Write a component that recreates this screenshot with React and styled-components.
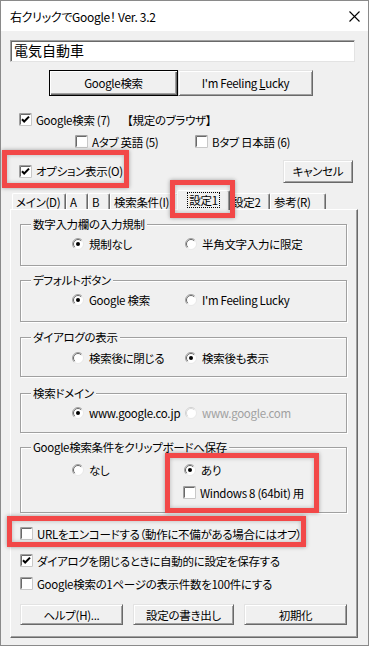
import React from 'react';
import styled, { createGlobalStyle } from 'styled-components';

const GlobalStyle = createGlobalStyle`
  * { box-sizing: border-box; }
  body {
    margin: 0;
    background: #f0f0f0;
  }
`;

const Frame = styled.div`
  position: relative;
  width: 369px;
  height: 646px;
  border: 1px solid #8a8a8a;
  background: #f0f0f0;
  display: flex;
  flex-direction: column;
  font-family: "Noto Sans CJK JP", "Noto Sans", sans-serif;
  font-size: 11.5px;
  font-feature-settings: "palt";
  letter-spacing: -0.3px;
  color: #000;
  overflow: hidden;
`;

const TitleBar = styled.div`
  height: 30px;
  flex: none;
  background: #fff;
  display: flex;
  align-items: center;
  justify-content: space-between;
  padding: 0 8px 0 9px;
`;

const TitleText = styled.span`
  font-size: 12px;
  line-height: 16px;
  padding-top: 1px;
`;

const SearchInput = styled.div`
  margin: 9px 13px 0 9px;
  height: 22px;
  background: #fff;
  border: 1px solid;
  border-color: #a0a0a0 #e3e3e3 #e3e3e3 #a0a0a0;
  box-shadow: inset 1px 1px 0 #696969;
  font-size: 14px;
  letter-spacing: 0;
  line-height: 19px;
  padding-left: 3px;
`;

const ButtonRow = styled.div`
  display: flex;
  margin-top: 8px;
  padding-left: 48px;
`;

const Button = styled.div`
  width: ${p => p.$w}px;
  height: ${p => p.$h || 21}px;
  display: flex;
  align-items: center;
  justify-content: center;
  background: #f0f0f0;
  border: 1px solid;
  border-color: ${p => (p.$default ? '#000' : '#e3e3e3 #696969 #696969 #e3e3e3')};
  box-shadow: ${p =>
    p.$default
      ? 'inset 1px 1px 0 #fff, inset -1px -1px 0 #696969, inset -2px -2px 0 #a0a0a0'
      : 'inset 1px 1px 0 #fff, inset -1px -1px 0 #a0a0a0'};
  line-height: 14px;
  white-space: nowrap;
`;

const Underline = styled.span`
  text-decoration: underline;
`;

const CheckLine = styled.div`
  display: flex;
  align-items: center;
  height: 13px;
  margin-top: ${p => p.$top}px;
  padding-left: ${p => p.$left}px;
`;

const OptionRow = styled.div`
  display: flex;
  align-items: center;
  justify-content: space-between;
  height: 22px;
  margin-top: 12px;
  padding: 0 15px 0 18px;
`;

const Item = styled.label`
  display: flex;
  align-items: center;
  gap: ${p => p.$gap || 4}px;
  width: ${p => (p.$w ? `${p.$w}px` : 'auto')};
  flex: none;
  white-space: nowrap;
  line-height: 14px;
  color: ${p => (p.$disabled ? '#a0a0a0' : '#000')};
`;

const Note = styled.span`
  white-space: nowrap;
  line-height: 14px;
`;

const TabStrip = styled.div`
  display: flex;
  align-items: flex-end;
  height: 19px;
  margin: 8px 0 0 11px;
  position: relative;
  z-index: 1;
`;

const Tab = styled.div`
  width: ${p => p.$w}px;
  height: ${p => (p.$active ? 20 : 16)}px;
  margin: ${p => (p.$active ? '0 -2px -1px -2px' : '0')};
  position: relative;
  z-index: ${p => (p.$active ? 2 : 1)};
  flex: none;
  display: flex;
  align-items: center;
  justify-content: ${p => (p.$active ? 'center' : 'flex-start')};
  padding-left: ${p => (p.$active ? 0 : 3)}px;
  overflow: hidden;
  white-space: nowrap;
  background: #f0f0f0;
  border-top: 1px solid #fff;
  border-left: 1px solid #fff;
  border-right: 1px solid #696969;
  box-shadow: inset -1px 0 0 #a0a0a0;
  border-radius: 2px 2px 0 0;
  padding-bottom: ${p => (p.$active ? 2 : 0)}px;
  line-height: 14px;
`;

const Focus = styled.span`
  outline: 1px dotted #000;
  outline-offset: 0;
  padding: 0 1px;
  line-height: 14px;
`;

const Panel = styled.div`
  margin-left: 9px;
  width: 348px;
  height: 429px;
  border: 1px solid;
  border-color: #fff #696969 #696969 #fff;
  box-shadow: inset -1px -1px 0 #a0a0a0;
  display: flex;
  flex-direction: column;
`;

const Group = styled.div`
  margin: ${p => p.$top}px 10px 0 9px;
  height: ${p => p.$h}px;
  border: 1px solid #a0a0a0;
  box-shadow: inset 1px 1px 0 #fff, 1px 1px 0 #fff;
  display: flex;
  flex-direction: column;
  flex: none;
`;

const GroupTitle = styled.span`
  align-self: flex-start;
  margin: -9px 0 0 10px;
  padding: 0 2px;
  height: 16px;
  line-height: 16px;
  background: #f0f0f0;
  white-space: nowrap;
`;

const RadioLine = styled.div`
  display: flex;
  align-items: center;
  height: 13px;
  margin-top: ${p => p.$top}px;
  padding-left: ${p => p.$left}px;
`;

const PanelButtons = styled.div`
  display: flex;
  justify-content: space-between;
  margin: 14px 10px 0 9px;
`;

const Highlight = styled.div`
  position: absolute;
  left: ${p => p.$x}px;
  top: ${p => p.$y}px;
  width: ${p => p.$w}px;
  height: ${p => p.$h}px;
  border: 5px solid #f24848;
  box-shadow: 0 0 4px rgba(0, 0, 0, 0.35), inset 0 0 4px rgba(0, 0, 0, 0.25);
  pointer-events: none;
  z-index: 5;
`;

function CloseIcon() {
  return (
    <svg width="11" height="11" viewBox="0 0 11 11">
      <path d="M0.5 0.5L10.5 10.5M10.5 0.5L0.5 10.5" stroke="#000" strokeWidth="1.1" fill="none" />
    </svg>
  );
}

function CheckBox({ checked }) {
  return (
    <svg width="13" height="13" viewBox="0 0 13 13" style={{ flex: 'none' }}>
      <rect x="0" y="0" width="13" height="13" fill="#fff" />
      <path d="M0.5 12.5V0.5H12.5" stroke="#a0a0a0" fill="none" />
      <path d="M1.5 11.5V1.5H11.5" stroke="#696969" fill="none" />
      <path d="M0.5 12.5H12.5V0.5" stroke="#c8c8c8" fill="none" />
      {checked && (
        <path d="M3 6.2L5.2 8.5L10 3.6" stroke="#000" strokeWidth="2" fill="none" />
      )}
    </svg>
  );
}

function Radio({ checked, disabled }) {
  return (
    <svg width="12" height="12" viewBox="0 0 12 12" style={{ flex: 'none' }}>
      <circle cx="6" cy="6" r="5.5" fill="#fff" />
      <path d="M2.1 9.9A5.5 5.5 0 0 1 9.9 2.1" stroke={disabled ? '#d0d0d0' : '#a0a0a0'} fill="none" />
      <path d="M2.8 9.2A4.5 4.5 0 0 1 9.2 2.8" stroke={disabled ? '#d8d8d8' : '#696969'} fill="none" />
      <path d="M9.9 2.1A5.5 5.5 0 0 1 2.1 9.9" stroke="#e8e8e8" fill="none" />
      {checked && <circle cx="6" cy="6" r="2" fill="#000" />}
    </svg>
  );
}

const tabs = [
  { label: 'メイン(D)', w: 54 },
  { label: 'A', w: 22 },
  { label: 'B', w: 22 },
  { label: '検索条件(I)', w: 69 },
  { label: '設定1', w: 49, active: true },
  { label: '設定2', w: 42 },
  { label: '参考(R)', w: 56 },
];

export default function App() {
  return (
    <>
      <GlobalStyle />
      <Frame>
        <TitleBar>
          <TitleText>右クリックでGoogle！ Ver. 3.2</TitleText>
          <CloseIcon />
        </TitleBar>

        <SearchInput>電気自動車</SearchInput>

        <ButtonRow>
          <Button $w={129} $h={26} $default>Google検索</Button>
          <Button $w={135} $h={26}>
            I&#39;m Feeling&nbsp;<Underline>L</Underline>ucky
          </Button>
        </ButtonRow>

        <CheckLine $top={17} $left={18}>
          <Item $w={108}>
            <CheckBox checked />
            Google検索 (7)
          </Item>
          <Note>【規定のブラウザ】</Note>
        </CheckLine>

        <CheckLine $top={9} $left={74}>
          <Item $w={120}>
            <CheckBox />
            Aタブ 英語 (5)
          </Item>
          <Item>
            <CheckBox />
            Bタブ 日本語 (6)
          </Item>
        </CheckLine>

        <OptionRow>
          <Item>
            <CheckBox checked />
            オプション表示(O)
          </Item>
          <Button $w={70} $h={23}>キャンセル</Button>
        </OptionRow>

        <TabStrip>
          {tabs.map(t => (
            <Tab key={t.label} $w={t.active ? t.w + 4 : t.w} $active={t.active}>
              {t.active ? <Focus>{t.label}</Focus> : t.label}
            </Tab>
          ))}
        </TabStrip>

        <Panel>
          <Group $top={14} $h={42}>
            <GroupTitle>数字入力欄の入力規制</GroupTitle>
            <RadioLine $top={5} $left={51}>
              <Item $w={113} $gap={5}>
                <Radio checked />
                規制なし
              </Item>
              <Item $gap={5}>
                <Radio />
                半角文字入力に限定
              </Item>
            </RadioLine>
          </Group>

          <Group $top={14} $h={42}>
            <GroupTitle>デフォルトボタン</GroupTitle>
            <RadioLine $top={5} $left={51}>
              <Item $w={113} $gap={5}>
                <Radio checked />
                Google 検索
              </Item>
              <Item $gap={5}>
                <Radio />
                I&#39;m Feeling Lucky
              </Item>
            </RadioLine>
          </Group>

          <Group $top={15} $h={40}>
            <GroupTitle>ダイアログの表示</GroupTitle>
            <RadioLine $top={6} $left={51}>
              <Item $w={113} $gap={5}>
                <Radio />
                検索後に閉じる
              </Item>
              <Item $gap={5}>
                <Radio checked />
                検索後も表示
              </Item>
            </RadioLine>
          </Group>

          <Group $top={16} $h={40}>
            <GroupTitle>検索ドメイン</GroupTitle>
            <RadioLine $top={5} $left={51}>
              <Item $w={113} $gap={5}>
                <Radio checked />
                www.google.co.jp
              </Item>
              <Item $gap={5} $disabled>
                <Radio disabled />
                www.google.com
              </Item>
            </RadioLine>
          </Group>

          <Group $top={14} $h={66}>
            <GroupTitle>Google検索条件をクリップボードへ保存</GroupTitle>
            <RadioLine $top={8} $left={51}>
              <Item $w={112} $gap={5}>
                <Radio />
                なし
              </Item>
              <Item $gap={5}>
                <Radio checked />
                あり
              </Item>
            </RadioLine>
            <RadioLine $top={10} $left={162}>
              <Item>
                <CheckBox />
                Windows 8 (64bit) 用
              </Item>
            </RadioLine>
          </Group>

          <CheckLine $top={14} $left={9}>
            <Item>
              <CheckBox />
              URLをエンコードする（動作に不備がある場合にはオフ）
            </Item>
          </CheckLine>
          <CheckLine $top={14} $left={9}>
            <Item>
              <CheckBox checked />
              ダイアログを閉じるときに自動的に設定を保存する
            </Item>
          </CheckLine>
          <CheckLine $top={10} $left={9}>
            <Item>
              <CheckBox />
              Google検索の1ページの表示件数を100件にする
            </Item>
          </CheckLine>

          <PanelButtons>
            <Button $w={103}>ヘルプ(H)...</Button>
            <Button $w={101}>設定の書き出し</Button>
            <Button $w={103}>初期化</Button>
          </PanelButtons>
        </Panel>

        <Highlight $x={1} $y={149} $w={127} $h={38} />
        <Highlight $x={169} $y={179} $w={65} $h={38} />
        <Highlight $x={164} $y={452} $w={154} $h={60} />
        <Highlight $x={6} $y={515} $w={299} $h={31} />
      </Frame>
    </>
  );
}
